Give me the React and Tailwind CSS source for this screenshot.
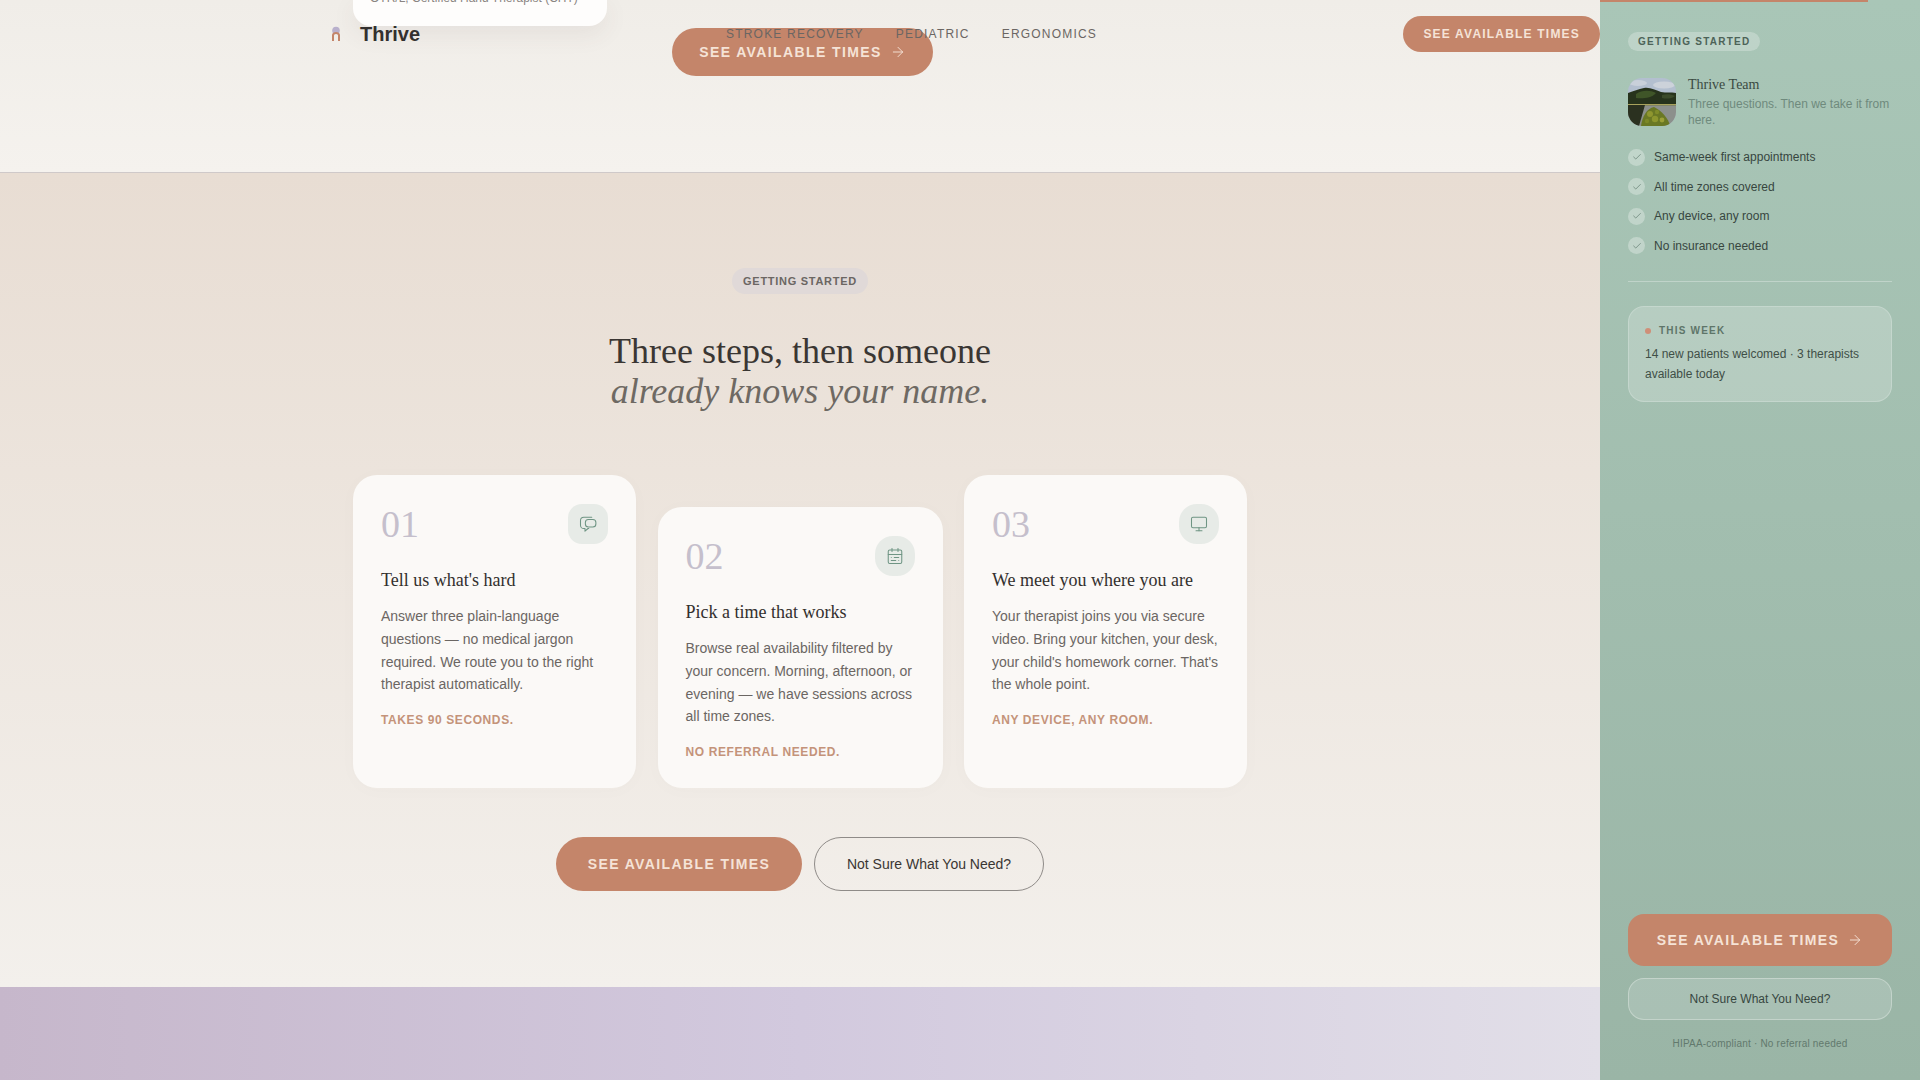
import { ArrowRight, CalendarRange, Check, Monitor } from "lucide-react";

// two overlapping bubbles, lucide has no close match for this one
function ChatIcon(props) {
  return (
    <svg viewBox="0 0 24 24" fill="none" stroke="currentColor" strokeLinecap="round" strokeLinejoin="round" {...props}>
      <path d="M17 3H6.5A4.5 4.5 0 0 0 2 7.5v6A4.5 4.5 0 0 0 6.5 18H8v3.5l4-3.5h1" />
      <rect x="8.5" y="6" width="14" height="10" rx="4" />
    </svg>
  );
}

const steps = [
  {
    num: "01",
    title: "Tell us what's hard",
    body: "Answer three plain-language questions — no medical jargon required. We route you to the right therapist automatically.",
    tag: "TAKES 90 SECONDS.",
    icon: ChatIcon,
    iconBox: "rounded-[14px]",
    offset: "",
  },
  {
    num: "02",
    title: "Pick a time that works",
    body: "Browse real availability filtered by your concern. Morning, afternoon, or evening — we have sessions across all time zones.",
    tag: "NO REFERRAL NEEDED.",
    icon: CalendarRange,
    iconBox: "rounded-[18px]",
    offset: "mt-[32px]",
  },
  {
    num: "03",
    title: "We meet you where you are",
    body: "Your therapist joins you via secure video. Bring your kitchen, your desk, your child's homework corner. That's the whole point.",
    tag: "ANY DEVICE, ANY ROOM.",
    icon: Monitor,
    iconBox: "rounded-[18px]",
    offset: "",
  },
];

const perks = [
  "Same-week first appointments",
  "All time zones covered",
  "Any device, any room",
  "No insurance needed",
];

function Logo() {
  return (
    <svg width="14" height="16" viewBox="0 0 14 16" className="blur-[0.4px]">
      <circle cx="7" cy="4.5" r="3.8" fill="#b9b0cc" />
      <path d="M3 15V9C3 7 5 6 7 6S11 7 11 9V15H9V9.5C9 8.5 8 8 7 8S5 8.5 5 9.5V15Z" fill="#c4856a" />
    </svg>
  );
}

function Avatar() {
  return (
    <svg viewBox="0 0 48 48" className="w-[48px] h-[48px] rounded-[14px] shrink-0 blur-[0.7px]">
      <rect width="48" height="48" fill="#b3bfcf" />
      <ellipse cx="10" cy="5" rx="9" ry="3" fill="#c9d0da" />
      <ellipse cx="36" cy="7" rx="11" ry="3.5" fill="#ccd2da" />
      <path d="M0 15C6 13 10 11 16 10 22 9 27 12 33 14 38 15 43 14 48 15V30H0Z" fill="#27331c" />
      <path d="M8 16C14 12 22 12 28 15 24 20 14 21 8 20Z" fill="#3f5528" />
      <path d="M34 17C38 16 43 16 47 18 44 21 38 21 34 20Z" fill="#3b4a2a" />
      <rect y="26" width="48" height="1.6" fill="#a8a25c" />
      <rect x="0" y="27.5" width="48" height="20.5" fill="#8c908c" />
      <path d="M0 27H17L11 48H0Z" fill="#2b3120" />
      <path d="M13 48C14 39 19 30 26 29 33 32 41 41 42 48Z" fill="#6a7824" />
      <circle cx="22" cy="36" r="3" fill="#8f962f" />
      <circle cx="29" cy="34" r="2.2" fill="#808c2a" />
      <circle cx="27" cy="41" r="3.2" fill="#8d962e" />
      <circle cx="34" cy="42" r="2.4" fill="#9ca038" />
      <circle cx="19" cy="43" r="2.2" fill="#7c8828" />
    </svg>
  );
}

function StepCard({ step }) {
  const Icon = step.icon;
  return (
    <div className={`rounded-[24px] bg-[#fbf9f7] px-[28px] pt-[29px] shadow-[0_2px_20px_rgba(120,100,90,0.02)] ${step.offset}`}>
      <div className="flex items-center justify-between h-[40px]">
        <span className="font-['Liberation_Serif',serif] text-[38px] leading-[40px] text-[#c5bfcc]">{step.num}</span>
        <div className={`w-[40px] h-[40px] bg-[#e7ebe7] flex items-center justify-center ${step.iconBox}`}>
          <Icon width={18} height={18} strokeWidth={1.4} className="text-[#6f9584]" />
        </div>
      </div>
      <h3 className="mt-[22px] font-['Liberation_Serif',serif] text-[18px] leading-[28px] text-[#33302e]">{step.title}</h3>
      <p className="mt-[11px] text-[14px] leading-[22.75px] text-[#6b6663]">{step.body}</p>
      <div className="mt-[15px] text-[12px] leading-[18px] font-bold tracking-[0.05em] text-[#c4937a]">{step.tag}</div>
    </div>
  );
}

export default function App() {
  return (
    <div className="flex h-screen overflow-hidden font-['Liberation_Sans',Arial,sans-serif] bg-[#f3f0ec]">
      <main className="relative w-[1600px] flex flex-col">
        {/* nav sits over the page */}
        <header className="absolute top-0 left-0 w-full h-[68px] flex items-center pl-[329px] z-10">
          <div className="w-[397px] flex items-center gap-[17px]">
            <Logo />
            <span className="text-[20px] font-bold text-[#33302e]">Thrive</span>
          </div>
          <nav className="flex gap-[32px] text-[12px] tracking-[0.1em] text-[#6b6663]">
            <a>STROKE RECOVERY</a>
            <a>PEDIATRIC</a>
            <a>ERGONOMICS</a>
          </nav>
          <button className="ml-auto h-[36px] px-[20px] rounded-full bg-[#c4856a] text-[12px] font-bold tracking-[0.1em] text-[#f5e3d7]">
            SEE AVAILABLE TIMES
          </button>
        </header>

        <section className="h-[173px] shrink-0 border-b border-[#cfc9c9] bg-gradient-to-b from-[#f0ede8] to-[#f5f2ee] overflow-hidden">
          <div className="w-[894px] mx-auto">
            <div className="w-[254px] h-[26px] bg-[#fefdfc] rounded-b-[18px] shadow-[0_8px_24px_rgba(90,70,60,0.08)] px-[17px] flex items-end pb-[20px] text-[12px] leading-[16px] text-[#8a8582] whitespace-nowrap">
              OTR/L, Certified Hand Therapist (CHT)
            </div>
            <button className="ml-[319px] mt-[2px] h-[48px] w-[261px] rounded-full bg-[#c4856a] flex items-center justify-center gap-[8px] text-[14px] font-bold tracking-[0.1em] text-[#f5e3d7]">
              SEE AVAILABLE TIMES
              <ArrowRight size={16} strokeWidth={1.4} />
            </button>
          </div>
        </section>

        <section className="h-[814px] shrink-0 pt-[95px] bg-gradient-to-b from-[#e8ddd3] to-[#f3f0ec]">
          <div className="flex flex-col items-center">
            <span className="h-[26px] px-[11px] rounded-full bg-[#e0d9d8] flex items-center text-[11px] font-bold tracking-[0.065em] text-[#6b6663]">
              GETTING STARTED
            </span>
            <h2 className="mt-[37px] text-center font-['Liberation_Serif',serif] text-[36px] leading-[40px] text-[#3a3633]">
              Three steps, then someone
              <br />
              <em className="text-[#6e6963]">already knows your name.</em>
            </h2>
          </div>
          <div className="mt-[64px] mx-auto w-[894px] h-[313px] grid grid-cols-[283px_285px_283px] gap-[21.5px]">
            {steps.map((s) => (
              <StepCard key={s.num} step={s} />
            ))}
          </div>
          <div className="mt-[49px] flex justify-center gap-[12px]">
            <button className="h-[54px] w-[246px] rounded-full bg-[#c4856a] text-[14px] font-bold tracking-[0.1em] text-[#f5e3d7]">
              SEE AVAILABLE TIMES
            </button>
            <button className="h-[54px] w-[230px] rounded-full border border-[#8f8b88] text-[14px] text-[#3a3633]">
              Not Sure What You Need?
            </button>
          </div>
        </section>

        <section className="flex-1 bg-gradient-to-r from-[#c6b7cb] via-[#d2c9de] to-[#e2dfe8]" />
      </main>

      <aside className="relative w-[320px] shrink-0 flex flex-col px-[28px] bg-gradient-to-b from-[#a9c6b7] to-[#9ab5a6]">
        <div className="absolute top-0 left-0 w-[268px] h-[2px] bg-[#c4856a]" />
        <span className="self-start mt-[32px] h-[19px] px-[10px] rounded-full bg-white/25 flex items-center text-[10px] font-bold tracking-[0.125em] text-[#4d6358]">
          GETTING STARTED
        </span>
        <div className="mt-[27px] flex gap-[12px]">
          <Avatar />
          <div className="-mt-[2px]">
            <div className="font-['Liberation_Serif',serif] text-[14px] leading-[18px] text-[#3a4a42]">Thrive Team</div>
            <p className="mt-[2px] text-[12px] leading-[16px] text-[#6f8a7d]">Three questions. Then we take it from here.</p>
          </div>
        </div>
        <ul className="mt-[20px] flex flex-col gap-[11.5px]">
          {perks.map((p) => (
            <li key={p} className="h-[18px] flex items-center gap-[9px] text-[12px] text-[#37463f]">
              <span className="w-[17px] h-[17px] rounded-full bg-white/30 flex items-center justify-center">
                <Check size={10} strokeWidth={1.5} className="text-[#557064]" />
              </span>
              {p}
            </li>
          ))}
        </ul>
        <div className="mt-[26px] h-px bg-white/30" />
        <div className="mt-[24px] h-[96px] rounded-[16px] border border-white/20 bg-white/20 px-[16px] pt-[17px]">
          <div className="flex items-center gap-[8px] text-[10px] leading-[14px] font-bold tracking-[0.12em] text-[#5e7569]">
            <span className="w-[6px] h-[6px] rounded-full bg-[#cf8f78]" />
            THIS WEEK
          </div>
          <p className="mt-[6px] text-[12px] leading-[20px] text-[#3f4f47]">14 new patients welcomed · 3 therapists available today</p>
        </div>
        <div className="mt-auto mb-[29px] flex flex-col">
          <button className="h-[52px] rounded-[16px] bg-[#c4856a] flex items-center justify-center gap-[8px] text-[14px] font-bold tracking-[0.1em] text-[#f5e3d7]">
            SEE AVAILABLE TIMES
            <ArrowRight size={16} strokeWidth={1.4} />
          </button>
          <button className="mt-[12px] h-[42px] rounded-[16px] border border-white/30 bg-white/15 text-[12px] text-[#37463f]">
            Not Sure What You Need?
          </button>
          <div className="mt-[17px] text-center text-[10px] leading-[14px] tracking-[0.02em] text-[#62796d]">HIPAA-compliant · No referral needed</div>
        </div>
      </aside>
    </div>
  );
}
